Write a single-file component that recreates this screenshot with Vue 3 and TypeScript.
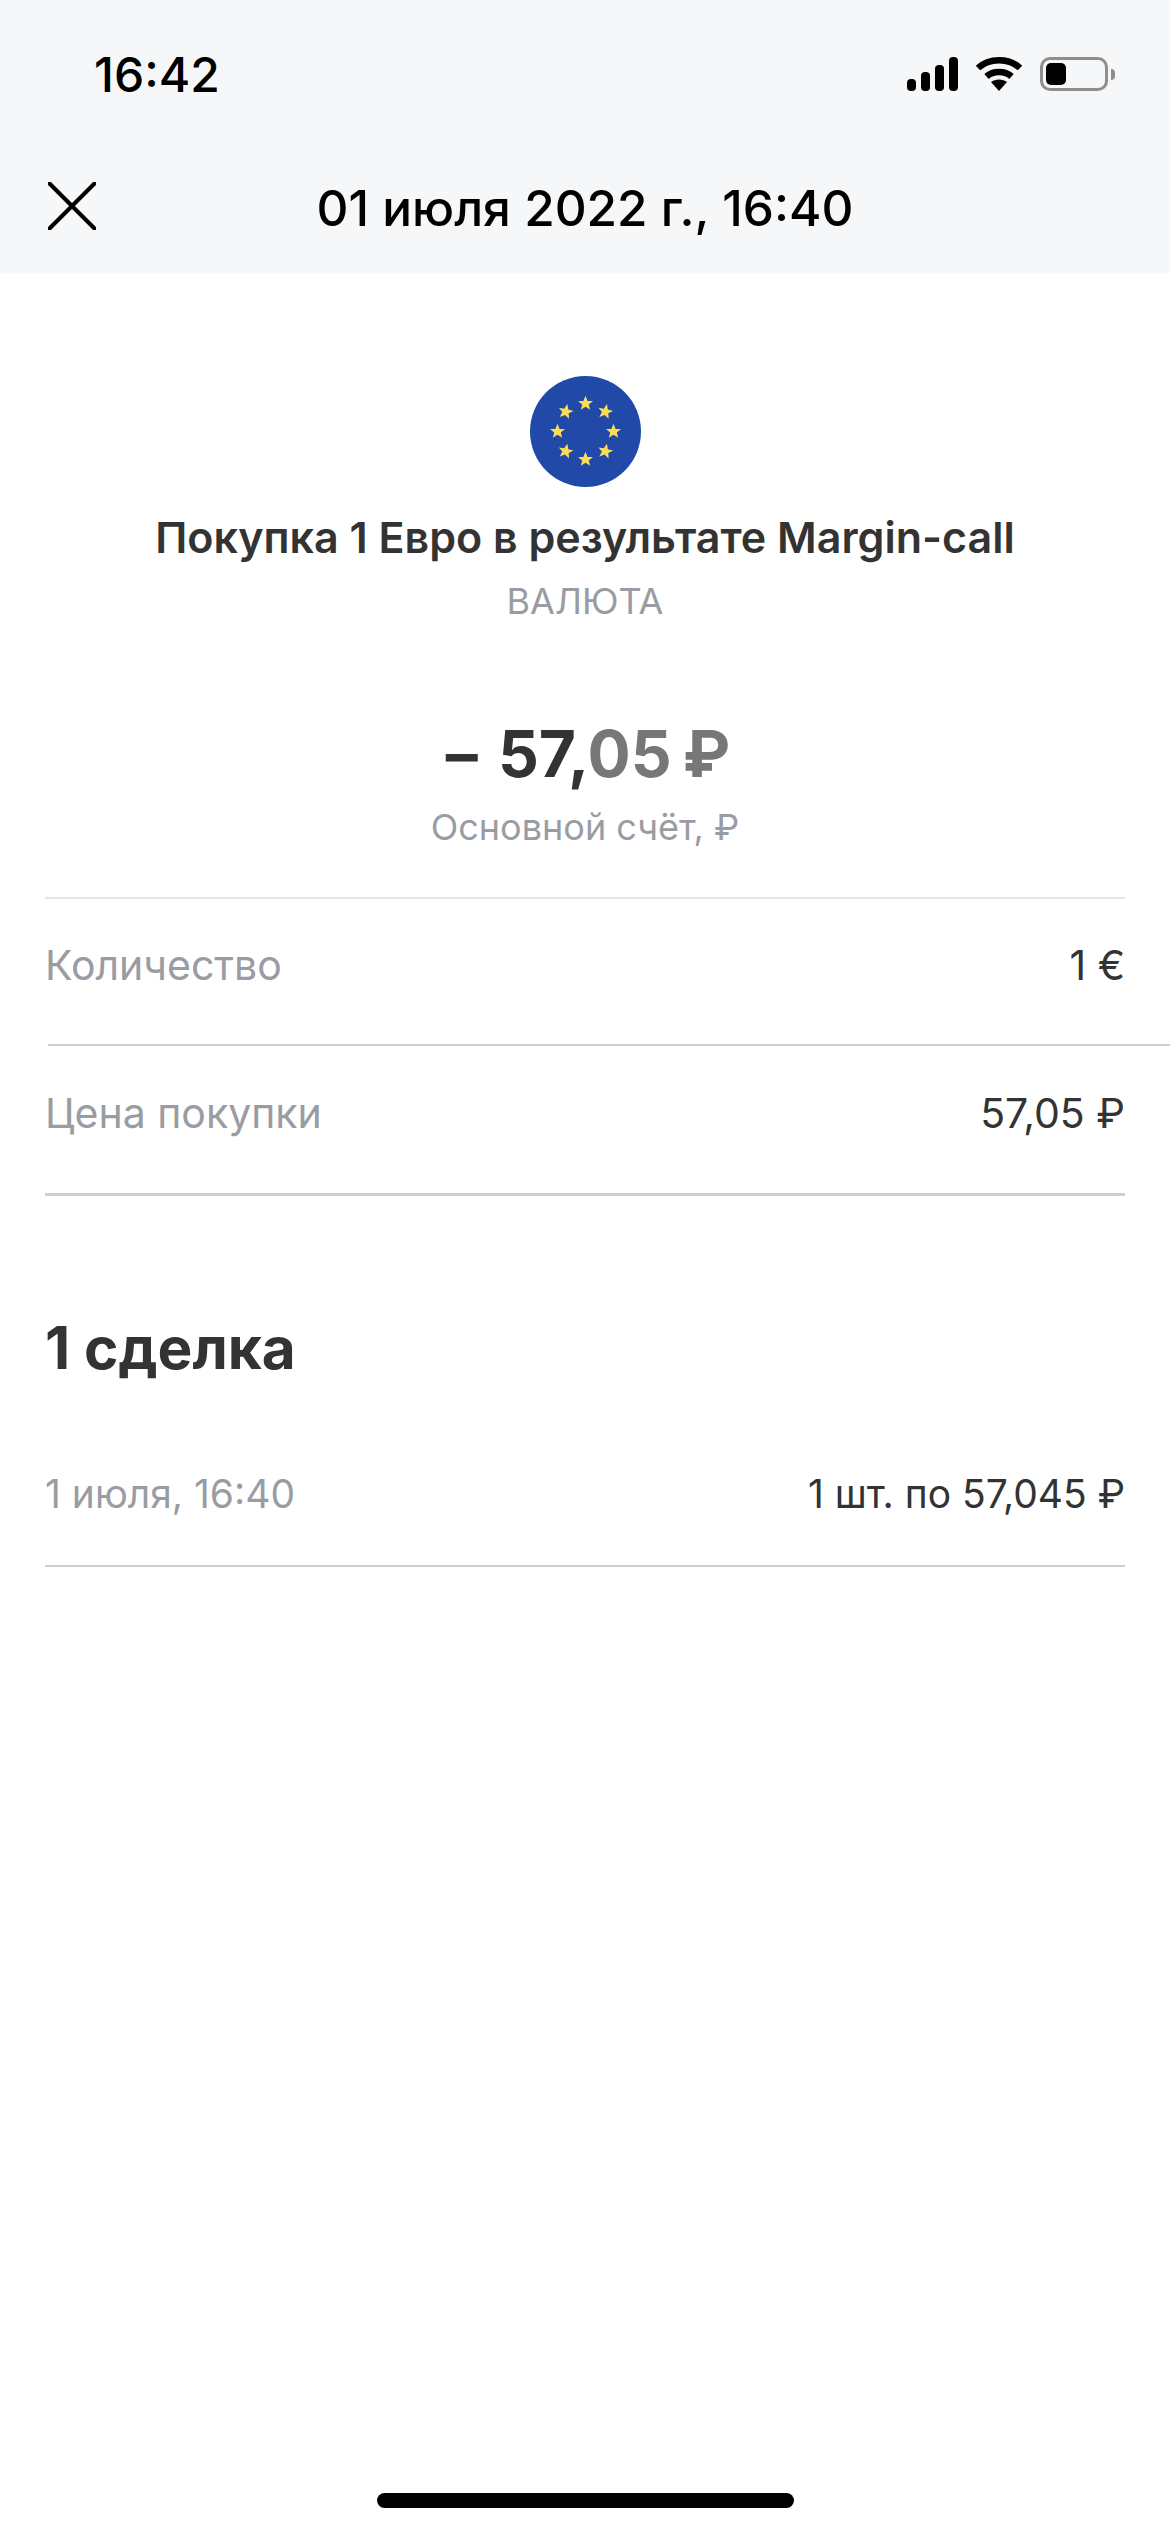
<script setup lang="ts">
const stars: number[] = [0, 45, 90, 135, 180, 225, 270, 315]
const starPath = 'M0 -7.800 L2.100 -2.600 L7.500 -2.400 L3.300 1 L4.700 6.300 L0 3.300 L-4.700 6.300 L-3.300 1 L-7.500 -2.400 L-2.100 -2.600 Z'
function starTransform(a: number): string {
  const r = (a * Math.PI) / 180
  const x = 55.500 + 28 * Math.sin(r)
  const y = 55.500 - 28 * Math.cos(r)
  return `translate(${x.toFixed(2)} ${y.toFixed(2)}) rotate(${a % 90 === 0 ? 0 : 12})`
}
</script>

<template>
  <div class="screen">
    <header class="top">
      <div class="status">
        <span class="clock">16:42</span>
        <div class="status-icons">
          <svg width="51" height="34" viewBox="0 0 51 34" fill="#000">
            <rect x="0" y="22" width="9" height="12" rx="4" />
            <rect x="14" y="15" width="9" height="19" rx="4" />
            <rect x="28" y="8" width="9" height="26" rx="4" />
            <rect x="42" y="0" width="9" height="34" rx="4" />
          </svg>
          <svg width="48" height="36" viewBox="0 0 48 36" fill="none">
            <path d="M3 13 C14 2.500 34 2.500 45 13" stroke="#000" stroke-width="6.500" stroke-linecap="butt" />
            <path d="M11.500 21.500 C18 15.500 30 15.500 36.500 21.500" stroke="#000" stroke-width="6.500" stroke-linecap="butt" />
            <path d="M16 27 C20 23.500 28 23.500 32 27 L24 36 Z" fill="#000" />
          </svg>
          <div class="battery">
            <div class="battery-body"><div class="battery-fill"></div></div>
            <div class="battery-nub"></div>
          </div>
        </div>
      </div>
      <nav class="nav">
        <svg class="close" width="48" height="48" viewBox="0 0 48 48" fill="none">
          <path d="M1.500 1.500 L46.500 46.500 M46.500 1.500 L1.500 46.500" stroke="#000" stroke-width="4" stroke-linecap="round" />
        </svg>
        <span class="nav-title">01 июля 2022 г., 16:40</span>
      </nav>
    </header>

    <main class="content">
      <section class="hero">
        <svg class="flag" width="111" height="111" viewBox="0 0 111 111">
          <circle cx="55.500" cy="55.500" r="55.500" fill="#2149a8" />
          <path
            v-for="a in stars"
            :key="a"
            :d="starPath"
            :transform="starTransform(a)"
            fill="#f8dc5a"
          />
        </svg>
        <h1 class="title">Покупка 1 Евро в результате Margin-call</h1>
        <div class="category">ВАЛЮТА</div>
        <div class="amount"><span class="dash">–</span> 57,<span class="amount-minor">05 <span class="rub">₽</span></span></div>
        <div class="account">Основной счёт, ₽</div>
      </section>

      <div class="row row-first">
        <span class="label">Количество</span>
        <span class="value">1 €</span>
      </div>
      <div class="divider-shifted"></div>
      <div class="row row-second">
        <span class="label">Цена покупки</span>
        <span class="value">57,05 ₽</span>
      </div>

      <h2 class="deals">1 сделка</h2>
      <div class="row deal-row">
        <span class="label">1 июля, 16:40</span>
        <span class="value">1 шт. по 57,045 ₽</span>
      </div>
    </main>

    <div class="home-bar"></div>
  </div>
</template>

<style scoped>
.screen {
  position: relative;
  width: 1170px;
  height: 2532px;
  background: #fff;
  overflow: hidden;
  font-family: Inter, "Liberation Sans", sans-serif;
  color: #333;
}
.top {
  height: 273px;
  background: #f6f7f9;
  display: flex;
  flex-direction: column;
}
.status {
  height: 148px;
  padding: 0 55px 0 94px;
  display: flex;
  align-items: flex-start;
  justify-content: space-between;
}
.clock {
  margin-top: 47px;
  font-size: 48px;
  line-height: 56px;
  font-weight: 500;
  color: #000;
}
.status-icons {
  margin-top: 55px;
  display: flex;
  align-items: flex-start;
  gap: 17px;
}
.status-icons svg:first-child {
  margin-top: 2px;
}
.battery {
  margin-top: 2px;
  display: flex;
  align-items: center;
  gap: 3px;
}
.battery-body {
  width: 68px;
  height: 34px;
  box-sizing: border-box;
  border: 3px solid #8e8e8e;
  border-radius: 10px;
  padding: 3px;
}
.battery-fill {
  width: 20px;
  height: 100%;
  background: #000;
  border-radius: 5px;
}
.battery-nub {
  width: 4px;
  height: 11px;
  background: #8e8e8e;
  border-radius: 0 4px 4px 0;
}
.nav {
  position: relative;
  height: 125px;
  display: flex;
  align-items: flex-start;
  justify-content: center;
}
.close {
  position: absolute;
  left: 48px;
  top: 34px;
}
.nav-title {
  margin-top: 34px;
  font-size: 49.500px;
  line-height: 52px;
  font-weight: 500;
  color: #000;
}
.content {
  display: flex;
  flex-direction: column;
}
.hero {
  height: 624px;
  padding-top: 103px;
  box-sizing: border-box;
  display: flex;
  flex-direction: column;
  align-items: center;
}
.flag {
  display: block;
  flex: none;
}
.title {
  margin: 24px 0 0;
  font-size: 43px;
  line-height: 52px;
  font-weight: 600;
  color: #333;
}
.category {
  margin-top: 16px;
  font-size: 36px;
  line-height: 44px;
  color: #9a9ca3;
}
.amount {
  margin-top: 91px;
  padding-left: 6px;
  font-size: 64px;
  line-height: 80px;
  font-weight: 700;
  color: #333;
}
.dash {
  margin-right: 5px;
}
.rub {
  margin-left: -4px;
}
.amount-minor {
  color: #777;
}
.account {
  margin-top: 10px;
  font-size: 36px;
  line-height: 46px;
  color: #9a9ca3;
}
.row {
  margin: 0 45px;
  display: flex;
  justify-content: space-between;
  align-items: center;
  box-sizing: border-box;
  font-size: 41px;
}
.row-first {
  height: 147px;
  padding-bottom: 13px;
  border-top: 2px solid #e6e6e8;
}
.divider-shifted {
  height: 2px;
  margin-left: 48px;
  background: #cfcfd2;
}
.row-second {
  height: 150px;
  padding-bottom: 14px;
  border-bottom: 3px solid #cfcfd2;
}
.label {
  color: #9a9ca3;
}
.value {
  color: #333;
}
.deals {
  margin: 118px 45px 0;
  font-size: 58.500px;
  line-height: 68px;
  font-weight: 700;
  color: #333;
}
.deal-row {
  height: 146px;
  margin-top: 39px;
  font-size: 39px;
  border-bottom: 2px solid #cfcfd2;
}
.home-bar {
  position: absolute;
  left: 377px;
  top: 2493px;
  width: 417px;
  height: 15px;
  border-radius: 8px;
  background: #000;
}
</style>
